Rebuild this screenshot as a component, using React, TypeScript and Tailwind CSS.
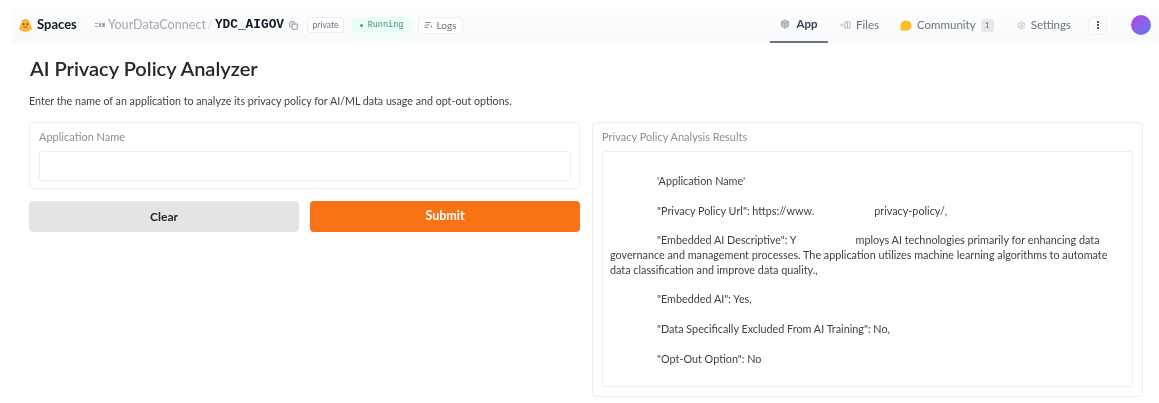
import { Copy, Box, Settings } from "lucide-react";

const sans = "font-['Lato',sans-serif]";

const paragraphs = [
  <>'Application Name'</>,
  <>
    "Privacy Policy Url": https://www.
    <span className="inline-block w-[60px]" />
    privacy-policy/,
  </>,
  <>
    "Embedded AI Descriptive": Y<span className="inline-block w-[59px]" />
    mploys AI technologies primarily for enhancing data governance and management processes. The
    application utilizes machine learning algorithms to automate data classification and improve
    data quality.,
  </>,
  <>"Embedded AI": Yes,</>,
  <>"Data Specifically Excluded From AI Training": No,</>,
  <>"Opt-Out Option": No</>,
];

function Header() {
  return (
    <header className="ml-3 flex h-[43px] justify-between bg-gradient-to-b from-white to-[#f8f9fb] pl-[6px] pr-2">
      <div className="flex items-center pt-[7px]">
        <svg width="15" height="15" viewBox="0 0 16 16" className="mr-[4px]">
          <path d="M8 1c3 0 4.600 2.200 4.800 5l2 4.500c.4 1.500-.8 2.500-2.300 2.500-1 1-2.800 1.600-4.500 1.600S4.500 14 3.500 13C2 13 .8 12 1.200 10.500l2-4.500C3.400 3.200 5 1 8 1z" fill="#fbb33a" />
          <circle cx="6" cy="6.500" r="0.900" fill="#3a3b45" />
          <circle cx="10" cy="6.500" r="0.900" fill="#3a3b45" />
          <path d="M6 9c1 1.200 3 1.200 4 0" stroke="#7a4a20" strokeWidth="1" fill="none" />
        </svg>
        <span className="w-[42px] text-[13px] font-bold whitespace-nowrap text-[#111827]">Spaces</span>
        <svg width="10" height="6" viewBox="0 0 10 6" className="ml-[16px] mr-[3px]">
          <path d="M0 1h3v1H0zM0 4h3v1H0zM4 1h2v4H4zM7 1h3v4H7z" fill="#a3a7b0" />
        </svg>
        <span className="w-[98px] text-[12.600px] whitespace-nowrap text-[#a5a9b3]">YourDataConnect</span>
        <span className="ml-[1px] mr-[2px] text-[13px] text-[#d1d5db]">/</span>
        <span className="font-['Liberation_Mono',monospace] text-[12.800px] font-bold text-[#111827]">
          YDC_AIGOV
        </span>
        <Copy size={9} className="ml-[5px] text-[#6b7280]" />
        <span className="ml-[9px] flex h-[16px] w-[37px] items-center justify-center rounded-[3px] border border-[#eceef1] bg-white text-[8.500px] text-[#6b7280]">
          private
        </span>
        <span className="ml-[7px] flex h-[17px] w-[61px] items-center justify-center gap-[5px] rounded-[4px] bg-[#ecfdf5] font-['Liberation_Mono',monospace] text-[8.500px] text-[#3f8f73]">
          <span className="h-[3px] w-[3px] rounded-full bg-[#34b17f]" />
          Running
        </span>
        <span className="ml-[6px] flex h-[17px] w-[45px] items-center justify-center gap-[4px] rounded-[4px] border border-[#eef0f3] bg-white text-[10px] text-[#6b7280]">
          <svg width="8" height="6" viewBox="0 0 8 6">
            <path d="M0 .5h6M0 3h4M0 5.500h3M6.500 3.500v2" stroke="#8b909a" strokeWidth="1" />
          </svg>
          Logs
        </span>
      </div>

      <div className="flex items-center pt-[7px]">
        <div className="flex h-full w-[58px] items-center justify-center gap-[6px] border-b-2 border-[#6b7280]">
          <Box size={10} className="fill-[#c4c7ce] text-[#9ca3af]" />
          <span className="text-[11.500px] font-bold text-[#374151]">App</span>
        </div>
        <div className="ml-3 flex items-center gap-[5px]">
          <svg width="11" height="8" viewBox="0 0 11 8">
            <path d="M0 4h2M3 2.500v3M5 1h5v6H5zM7.500 1v6" stroke="#b2b6bf" strokeWidth="1" fill="none" />
          </svg>
          <span className="text-[11.500px] text-[#6b7280]">Files</span>
        </div>
        <div className="ml-[21px] flex items-center gap-[5px]">
          <svg width="12" height="11" viewBox="0 0 12 11">
            <path d="M6 .5c3.200 0 5.500 2.200 5.500 5s-2 5-5 5H1.500C.5 10.500 .5 9.500.5 8.500v-3C.5 2.700 2.800.5 6 .5z" fill="#fbbf24" />
          </svg>
          <span className="text-[11.500px] text-[#6b7280]">Community</span>
          <span className="flex h-[13px] w-[13px] items-center justify-center rounded-[3px] bg-[#e5e7eb] text-[8px] text-[#6b7280]">
            1
          </span>
        </div>
        <div className="ml-[23px] flex items-center gap-[5px]">
          <Settings size={9} className="text-[#b2b6bf]" />
          <span className="text-[11.500px] text-[#6b7280]">Settings</span>
        </div>
        <span className="ml-[17px] flex h-[19px] w-[19px] flex-col items-center justify-center gap-[1px] rounded-[4px] border border-[#f0f1f3] bg-[#fbfbfc]">
          <span className="h-[2px] w-[2px] bg-[#4b5563]" />
          <span className="h-[2px] w-[2px] bg-[#4b5563]" />
          <span className="h-[2px] w-[2px] bg-[#4b5563]" />
        </span>
        <span className="ml-[24px] h-[20px] w-[20px] rounded-full bg-gradient-to-br from-[#b23bdc] to-[#4f7bf7]" />
      </div>
    </header>
  );
}

export default function App() {
  return (
    <div className={`h-[403px] w-[1159px] overflow-hidden bg-white blur-[0.4px] ${sans}`}>
      <Header />
      <main className="pl-[29px] pr-[16px]">
        <h1 className="mt-[11px] pl-[1px] text-[20px] leading-[28px] font-semibold text-[#27272a]">
          AI Privacy Policy Analyzer
        </h1>
        <p className="mt-[11px] text-[10.700px] leading-[16px] text-[#3f3f46]">
          Enter the name of an application to analyze its privacy policy for AI/ML data usage and
          opt-out options.
        </p>
        <div className="mt-[13px] grid grid-cols-[551px_551px] gap-[12px]">
          <div>
            <div className="rounded-[4px] border border-[#eceef1] pt-[7px] pr-[8px] pb-[7px] pl-[9px]">
              <div className="text-[11px] leading-[14px] text-[#8b8f98]">Application Name</div>
              <div className="mt-[7px] h-[30px] rounded-[3px] border border-[#eceef1]" />
            </div>
            <div className="mt-[12px] grid grid-cols-2 gap-[11px]">
              <button className="h-[31px] rounded-[4px] bg-[#e4e4e7] text-[12px] font-bold text-[#27272a]">
                Clear
              </button>
              <button className="h-[31px] rounded-[4px] bg-[#f97316] text-[12.500px] font-bold text-white">
                Submit
              </button>
            </div>
          </div>
          <div className="h-[275px] rounded-[4px] border border-[#eceef1] px-[9px] pt-[7px]">
            <div className="text-[11px] leading-[14px] text-[#8b8f98]">
              Privacy Policy Analysis Results
            </div>
            <div className="mt-[7px] h-[236px] rounded-[3px] border border-[#eceef1] pt-[22px] pr-[20px] pl-[7px]">
              {paragraphs.map((text, i) => (
                <p key={i} className="mb-[14.800px] indent-[47px] text-[10.800px] leading-[14.800px] text-[#3f3f46]">
                  {text}
                </p>
              ))}
            </div>
          </div>
        </div>
      </main>
    </div>
  );
}
